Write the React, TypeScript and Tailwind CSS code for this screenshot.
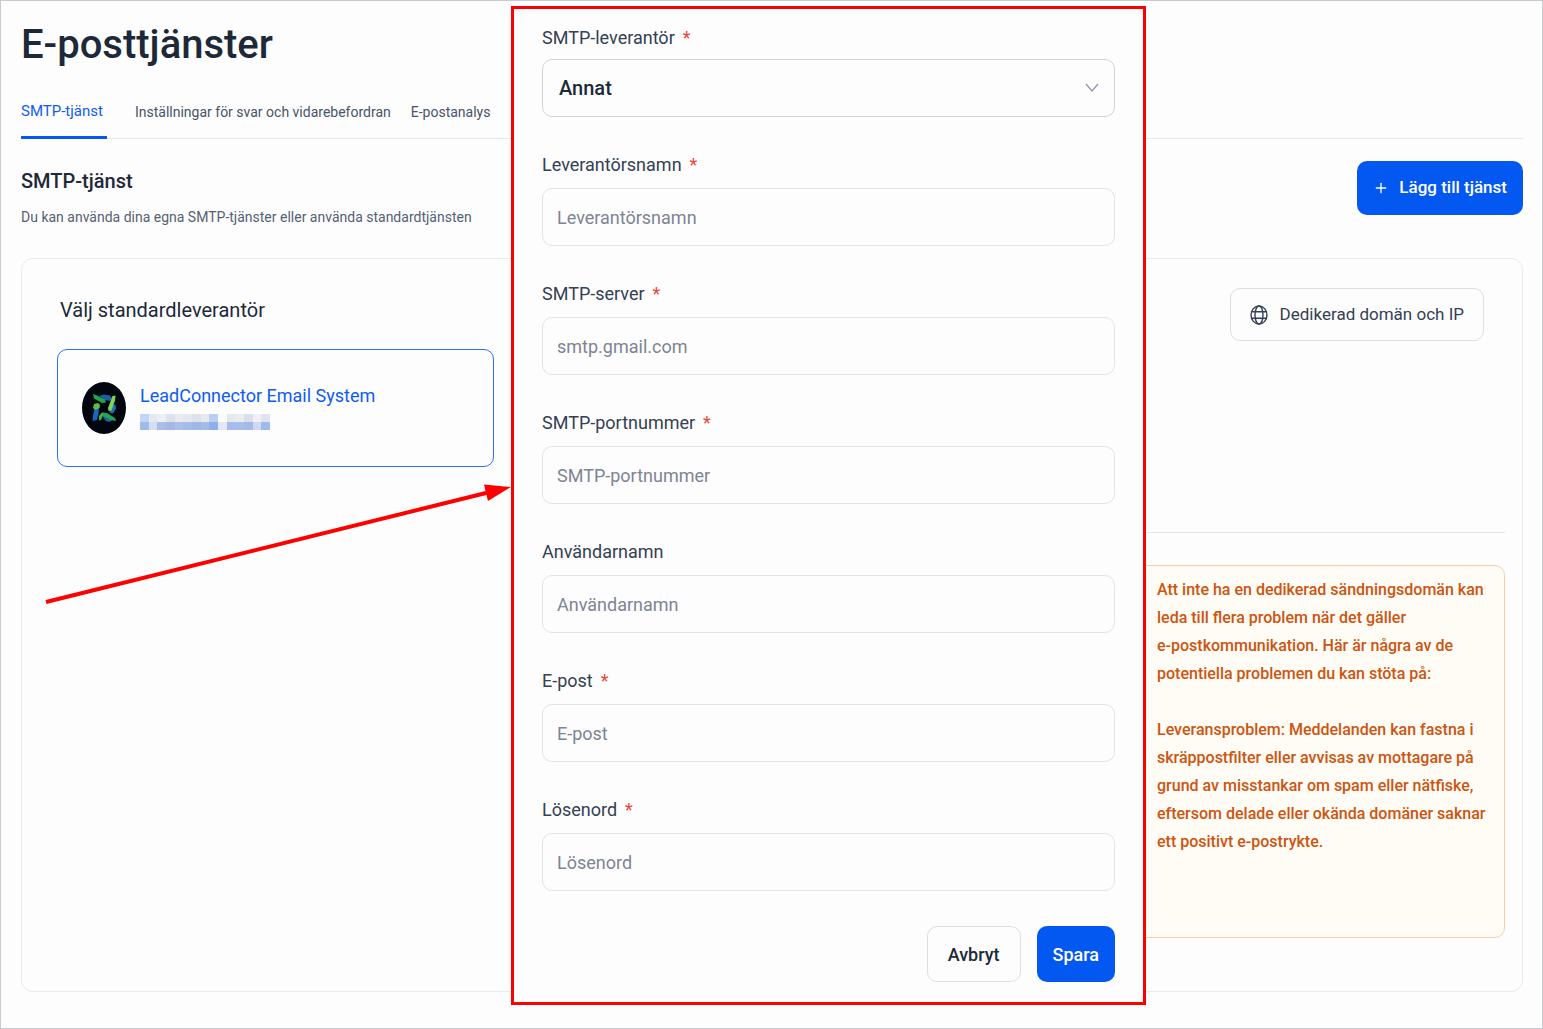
import React from "react";
import { Plus } from "lucide-react";

const tabs = [
  { label: "SMTP-tjänst", active: true },
  { label: "Inställningar för svar och vidarebefordran", active: false },
  { label: "E-postanalys", active: false },
];

const fields = [
  { id: "provider-name", label: "Leverantörsnamn", placeholder: "Leverantörsnamn", required: true, type: "text" },
  { id: "smtp-server", label: "SMTP-server", placeholder: "smtp.gmail.com", required: true, type: "text" },
  { id: "smtp-port", label: "SMTP-portnummer", placeholder: "SMTP-portnummer", required: true, type: "text" },
  { id: "username", label: "Användarnamn", placeholder: "Användarnamn", required: false, type: "text" },
  { id: "email", label: "E-post", placeholder: "E-post", required: true, type: "email" },
  { id: "password", label: "Lösenord", placeholder: "Lösenord", required: true, type: "password" },
];

function GlobeIcon() {
  return (
    <svg width="18" height="20" viewBox="0 0 18 20" fill="none" stroke="#344054" strokeWidth="1.4" aria-hidden="true">
      <ellipse cx="9" cy="10" rx="8" ry="9" />
      <ellipse cx="9" cy="10" rx="4" ry="9" />
      <path d="M1.6 6.8h14.8M1.6 13.2h14.8" />
    </svg>
  );
}

function ProviderLogo() {
  return (
    <svg width="44" height="52" viewBox="0 0 44 52" aria-hidden="true" className="shrink-0">
      <ellipse cx="22" cy="26" rx="22" ry="26" fill="#03060f" />
      <path d="M17 14l5-1.500 6 1 2 3-2 2.500-5-1z" fill="#1c5f9e" />
      <path d="M11 12l4 1.500 8 4 1 3-4 .500-8-4.500z" fill="#1fa64c" />
      <path d="M29.500 23l4-.500.500 4-3 5-3.500-1z" fill="#1f6fb5" />
      <path d="M30.500 14l3-.500-.500 5-3.500 10-3 .500-.500-3z" fill="#7fd45a" />
      <path d="M12.500 27l4.500-1-.500 5-1.500 7-4.500 1 .500-5z" fill="#1b63c4" />
      <path d="M12 22l4-1 2 2-.500 3-4 2-2.500-2z" fill="#56c443" />
      <path d="M20.500 34l5-1 5 5-3 2-4-1z" fill="#1d659f" />
      <path d="M17 34l3-3.500 2 .500-3 7-2 .500z" fill="#3cb548" />
      <path d="M21 30.500l4 .500 8 5 1 3-5-1-8-4z" fill="#22a750" />
    </svg>
  );
}

function RedactedLine() {
  const top = ["#c3d5f6", "#e4e8f1", "#eceff5", "#dfe2ea", "#e9ebf1", "#e4e7ee", "#dfe2ea", "#e7e9f0", "#bccff3", "#fafbfe", "#e6e8ef", "#eaecf2", "#dcdfe9", "#eef0f5", "#dfe4f0"];
  const bottom = ["#9fbbee", "#d5def1", "#a9bde6", "#a3b8e3", "#adc0e8", "#a5bbe8", "#9fb7e6", "#a6bce8", "#8fb0ec", "#e3e8f4", "#a5bdeb", "#a8bdea", "#a4bbe8", "#cfd9f0", "#9dbaf0"];
  return (
    <svg width="130" height="16" viewBox="0 0 130 16" preserveAspectRatio="none" shapeRendering="crispEdges" aria-hidden="true">
      {top.map((c, i) => (
        <rect key={i} x={i * 8.67} y="0" width="8.67" height="8" fill={c} />
      ))}
      {bottom.map((c, i) => (
        <rect key={i} x={i * 8.67} y="8" width="8.67" height="8" fill={c} />
      ))}
    </svg>
  );
}

function FieldLabel({ id, children, required }: { id: string; children: React.ReactNode; required?: boolean }) {
  return (
    <label htmlFor={id} className="flex h-7 items-center gap-2 text-[18px] text-[#344054]">
      {children}
      {required && <span className="text-[#f04438]">*</span>}
    </label>
  );
}

function SmtpDialog() {
  return (
    <form
      role="dialog"
      aria-label="SMTP-leverantör"
      onSubmit={(e) => e.preventDefault()}
      className="absolute top-[5px] left-[510px] w-[635px] border-3 border-[#ff0000] bg-[#fdfdfe] px-7 pt-[14px] pb-5"
    >
      <div className="flex flex-col gap-[33px]">
        <div className="flex flex-col gap-2">
          <FieldLabel id="provider" required>
            SMTP-leverantör
          </FieldLabel>
          <div className="relative">
            <select
              id="provider"
              className="h-[58px] w-full appearance-none rounded-[10px] border border-[#d0d3da] bg-transparent px-4 text-[20px] font-medium text-[#1d2939]"
            >
              <option>Annat</option>
            </select>
            <svg
              className="pointer-events-none absolute top-6 right-4"
              width="14"
              height="9"
              viewBox="0 0 14 9"
              fill="none"
              stroke="#98a0ae"
              strokeWidth="1.5"
              aria-hidden="true"
            >
              <path d="M1 1l6 7 6-7" />
            </svg>
          </div>
        </div>
        {fields.map((f) => (
          <div key={f.id} className="flex flex-col gap-[10px]">
            <FieldLabel id={f.id} required={f.required}>
              {f.label}
            </FieldLabel>
            <input
              id={f.id}
              type={f.type}
              placeholder={f.placeholder}
              className="h-[58px] w-full rounded-[10px] border border-[#e1e3e8] bg-transparent px-[14px] text-[18px] placeholder:text-[#7d8494]"
            />
          </div>
        ))}
      </div>
      <div className="mt-[35px] flex justify-end gap-4">
        <button type="button" className="h-14 rounded-[10px] border border-[#dcdee4] px-5 text-[18px] font-medium text-[#1d2939]">
          Avbryt
        </button>
        <button type="submit" className="h-14 rounded-[10px] bg-[#0458f2] px-4 text-[18px] font-medium text-white">
          Spara
        </button>
      </div>
    </form>
  );
}

export default function App() {
  return (
    <div className="relative min-h-screen border border-[#c9cad0] bg-[#fdfdfe] pr-[19px] pb-9 pl-5 font-['Roboto',sans-serif] text-[#1d2939]">
      <header>
        <h1 className="pt-5 text-[40px] leading-[48px] font-medium">E-posttjänster</h1>
        <nav className="mt-[14px] flex h-14 gap-5 border-b border-[#e7e8ec]">
          {tabs.map((t) => (
            <a
              key={t.label}
              href="#"
              className={
                t.active
                  ? "mr-2 -mb-px flex items-center border-b-3 border-[#0458f2] pt-1 pr-1 text-[15px] text-[#0f5cf0]"
                  : "flex items-center pt-1 text-[14px] text-[#475467]"
              }
            >
              {t.label}
            </a>
          ))}
        </nav>
      </header>

      <main>
        <section className="flex items-start justify-between pt-[22px]">
          <div>
            <h2 className="text-[20px] leading-10 font-medium">SMTP-tjänst</h2>
            <p className="text-[14px] leading-8 text-[#566072]">
              Du kan använda dina egna SMTP-tjänster eller använda standardtjänsten
            </p>
          </div>
          <button className="flex h-[54px] items-center gap-[10px] rounded-[10px] bg-[#0458f2] px-4 text-[17px] font-medium text-white">
            <Plus size={16} strokeWidth={2} aria-hidden="true" />
            Lägg till tjänst
          </button>
        </section>

        <section className="mt-[25px] flex justify-between rounded-xl border border-[#e9eaee] pr-[17px] pb-[53px] pl-[35px]">
          <div className="w-[437px] pt-[33px]">
            <h3 className="pl-[3px] text-[20px] leading-9">Välj standardleverantör</h3>
            <button className="mt-[21px] flex h-[118px] w-full items-center gap-[14px] rounded-[10px] border border-[#2f6fee] px-6 text-left">
              <ProviderLogo />
              <span className="flex flex-col gap-1 pb-1">
                <span className="text-[18px] leading-7 text-[#0f5cf0]">LeadConnector Email System</span>
                <RedactedLine />
              </span>
            </button>
          </div>

          <div className="w-[400px]">
            <div className="flex justify-end border-b border-[#e4e6eb] pt-[29px] pr-[21px] pb-[191px]">
              <button className="flex h-[53px] items-center gap-3 rounded-[10px] border border-[#dcdee4] px-[19px] text-[17px] text-[#344054]">
                <GlobeIcon />
                Dedikerad domän och IP
              </button>
            </div>
            <div className="mt-8 min-h-[373px] rounded-[10px] border border-[#f8cfa4] bg-[#fffbf5] pt-[10px] pl-[51px] text-[16px] leading-[28px] font-medium text-[#cc5510]">
              <p>
                Att inte ha en dedikerad sändningsdomän kan
                <br />
                leda till flera problem när det gäller
                <br />
                e-postkommunikation. Här är några av de
                <br />
                potentiella problemen du kan stöta på:
              </p>
              <p className="mt-7">
                Leveransproblem: Meddelanden kan fastna i
                <br />
                skräppostfilter eller avvisas av mottagare på
                <br />
                grund av misstankar om spam eller nätfiske,
                <br />
                eftersom delade eller okända domäner saknar
                <br />
                ett positivt e-postrykte.
              </p>
            </div>
          </div>
        </section>
      </main>

      <SmtpDialog />

      <svg
        className="pointer-events-none absolute top-[479px] left-[39px]"
        width="475"
        height="130"
        viewBox="40 480 475 130"
        aria-hidden="true"
      >
        <path d="M46 602L490 492" stroke="#ff0000" strokeWidth="4" />
        <path d="M511 487L484 484.500L488 501Z" fill="#ff0000" />
      </svg>
    </div>
  );
}
